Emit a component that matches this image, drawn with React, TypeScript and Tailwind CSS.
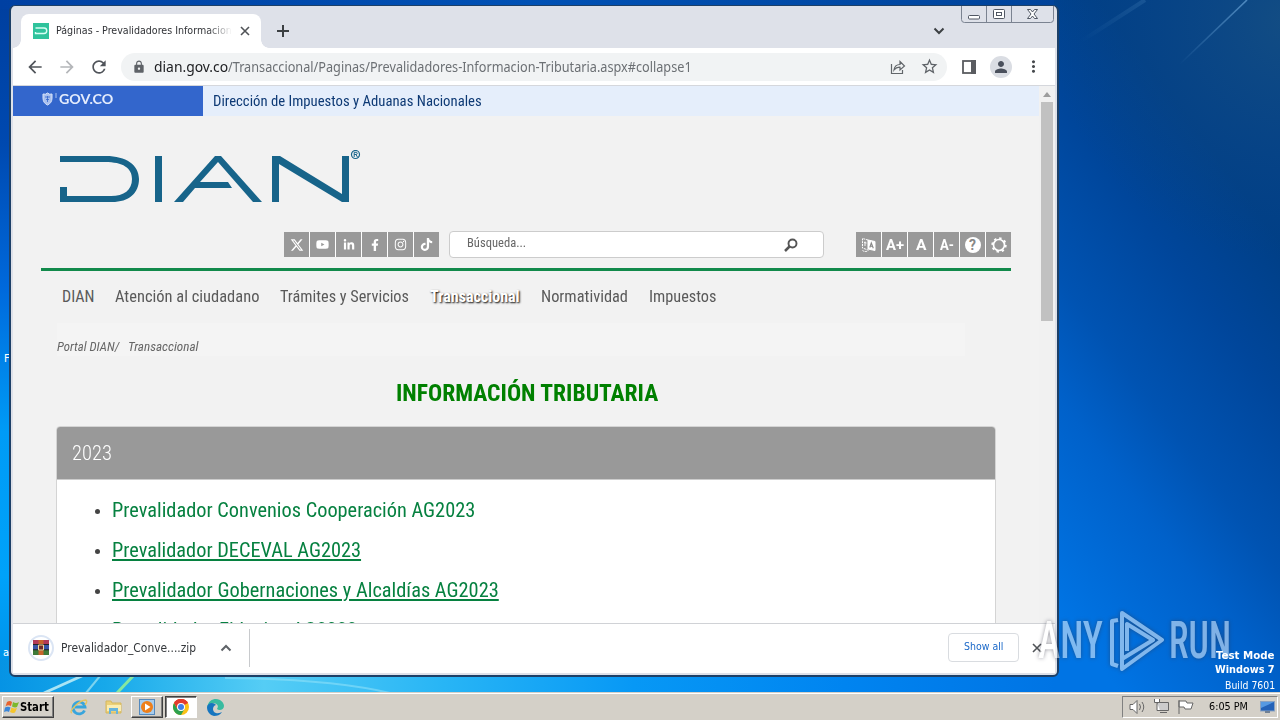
import React, { useLayoutEffect, useRef, useState } from 'react';
import { FaLinkedinIn, FaFacebookF, FaInstagram, FaTiktok, FaYoutube } from 'react-icons/fa';
import { FaXTwitter } from 'react-icons/fa6';
import { MdRefresh, MdLock, MdStarOutline, MdPerson, MdMoreVert, MdArrowBack, MdArrowForward } from 'react-icons/md';

interface FitProps {
  w: number;
  className?: string;
  inner?: string;
  children: React.ReactNode;
}

// Squeezes a line of text horizontally so that it takes exactly `w` pixels.
const Fit: React.FC<FitProps> = ({ w, className = '', inner = '', children }) => {
  const ref = useRef<HTMLSpanElement>(null);
  const [scale, setScale] = useState(1);

  useLayoutEffect(() => {
    if (ref.current) setScale(w / ref.current.offsetWidth);
  }, [w]);

  return (
    <span className={`block shrink-0 whitespace-nowrap ${className}`} style={{ width: w }}>
      <span ref={ref} className={`inline-block origin-left ${inner}`} style={{ transform: `scaleX(${scale})` }}>
        {children}
      </span>
    </span>
  );
};

const nav = [
  { label: 'DIAN', w: 32 },
  { label: 'Atención al ciudadano', w: 144 },
  { label: 'Trámites y Servicios', w: 129 },
  { label: 'Transaccional', w: 90, active: true },
  { label: 'Normatividad', w: 87 },
  { label: 'Impuestos', w: 67 },
];

const links = [
  { label: 'Prevalidador Convenios Cooperación AG2023', w: 363, underline: false },
  { label: 'Prevalidador DECEVAL AG2023', w: 249, underline: true },
  { label: 'Prevalidador Gobernaciones y Alcaldías AG2023', w: 387, underline: true },
  { label: 'Prevalidador Fiducias AG2023', w: 245, underline: true },
];

const Tile: React.FC<{ children: React.ReactNode }> = ({ children }) => (
  <span className="flex h-[25px] w-[25px] items-center justify-center bg-[#999] text-[14px] font-bold text-white">{children}</span>
);

const CloseIcon: React.FC<{ className: string }> = ({ className }) => (
  <svg className={className} width="10" height="10" viewBox="0 0 10 10">
    <path d="M1 1l8 8M9 1L1 9" stroke="#505357" strokeWidth="1.600" />
  </svg>
);

const Wallpaper = () => (
  <svg className="absolute inset-0" width="1280" height="720" viewBox="0 0 1280 720">
    <defs>
      <linearGradient id="left" x1="0" y1="0" x2="0" y2="1">
        <stop offset="0" stopColor="#003f9f" />
        <stop offset=".2" stopColor="#0049b0" />
        <stop offset=".4" stopColor="#0069dc" />
        <stop offset=".6" stopColor="#009bf6" />
        <stop offset=".8" stopColor="#00a2fa" />
        <stop offset="1" stopColor="#0089e0" />
      </linearGradient>
      <linearGradient id="bottom">
        <stop offset="0" stopColor="#0693e4" />
        <stop offset=".1" stopColor="#17a9ea" />
        <stop offset=".25" stopColor="#55cdf5" />
        <stop offset=".42" stopColor="#28b5f5" />
        <stop offset=".6" stopColor="#0798f5" />
        <stop offset=".8" stopColor="#0084f0" />
        <stop offset="1" stopColor="#0074e4" />
      </linearGradient>
      <linearGradient id="right" gradientUnits="userSpaceOnUse" x1="1050" y1="600" x2="1370" y2="360">
        <stop offset="0" stopColor="#0074e4" />
        <stop offset=".32" stopColor="#0061ca" />
        <stop offset=".5" stopColor="#0053b2" />
        <stop offset=".76" stopColor="#00469b" />
        <stop offset="1" stopColor="#003f86" />
      </linearGradient>
      <radialGradient id="corner" gradientUnits="userSpaceOnUse" cx="1290" cy="20" r="240">
        <stop offset="0" stopColor="#134d83" />
        <stop offset="1" stopColor="#0a4489" stopOpacity="0" />
      </radialGradient>
      <linearGradient id="ray" x1="1" y1="0" x2="0" y2="1">
        <stop offset="0" stopColor="#4f8ac0" />
        <stop offset="1" stopColor="#4f8ac0" stopOpacity="0" />
      </linearGradient>
      <linearGradient id="top">
        <stop offset="0" stopColor="#0040a2" />
        <stop offset=".5" stopColor="#0051b5" />
        <stop offset="1" stopColor="#00439a" />
      </linearGradient>
    </defs>
    <rect width="700" height="720" fill="url(#left)" />
    <rect y="660" width="1056" height="40" fill="url(#bottom)" />
    <rect width="1058" height="9" fill="url(#top)" />
    <rect x="1054" width="226" height="720" fill="url(#right)" />
    <rect x="1054" width="226" height="260" fill="url(#corner)" />
    <path d="M1180 64L1247 0" stroke="url(#ray)" strokeWidth="1.600" />
    <path d="M1080 42L1145 0" stroke="url(#ray)" strokeWidth="4" opacity=".25" />
    <path d="M44 693L84 675" stroke="#a9e4f5" strokeWidth="3" />
    <path d="M86 693L100 676" stroke="#7bd3ef" strokeWidth="2" />
    <path d="M117 693L134 675" stroke="#86e8a0" strokeWidth="3" />
    <path d="M225 678Q330 679 390 693" stroke="#9be6fa" strokeWidth="2" fill="none" opacity=".5" />
  </svg>
);

const DianLogo = () => (
  <svg width="302" height="56" viewBox="0 0 302 56" fill="none" className="block">
    <g fill="#17648a">
      <path d="M0 6h46c20 0 33 9 33 23s-10 23-27 23H0V37h7v9h44c13 0 21-6 21-17S63 12 45 12H0z" />
      <path d="M95 6h7v46h-7zM114 52l41-46h6l41 46h-9l-35-40-18 20h28l4 6h-37l-12 14zM212 52V6h8l62 38V6h7v46h-7l-63-38v38z" />
    </g>
    <circle cx="295.500" cy="4.500" r="4" stroke="#17648a" strokeWidth="1.200" />
    <path d="M294.200 7V2.300h2q1 0 1 1.100t-1 1.100h-2m1.800 0l1.400 2.500" stroke="#17648a" strokeWidth="1" />
  </svg>
);

const TabStrip = () => (
  <div className="flex h-[39px] items-end">
    <div className="relative ml-2 flex h-[34px] w-[240px] items-center rounded-t-lg bg-white pl-3 before:absolute before:bottom-0 before:-left-2 before:h-2 before:w-2 before:bg-[radial-gradient(circle_at_0_0,transparent_7.5px,white_8px)] after:absolute after:-right-2 after:bottom-0 after:h-2 after:w-2 after:bg-[radial-gradient(circle_at_100%_0,transparent_7.5px,white_8px)]">
      <svg width="16" height="16" viewBox="0 0 16 16">
        <rect width="16" height="16" fill="#2fc39c" />
        <path d="M2.500 5h8.500a2.600 2.600 0 0 1 0 5.500H2.500v-1.500" stroke="#d8fff4" strokeWidth="1.400" fill="none" />
      </svg>
      <Fit w={176} className="ml-[7px] [mask-image:linear-gradient(90deg,black_86%,transparent)] text-[11px] text-[#303236]">Páginas - Prevalidadores Informacion</Fit>
      <CloseIcon className="ml-[8px]" />
    </div>
    <svg className="mb-[11px] ml-[16px]" width="12" height="12" viewBox="0 0 12 12">
      <path d="M6 0v12M0 6h12" stroke="#3c4043" strokeWidth="2" />
    </svg>
    <svg className="mr-[110px] mb-[13px] ml-auto" width="12" height="8" viewBox="0 0 12 8">
      <path d="M1.500 1.500L6 6l4.500-4.500" stroke="#3c4043" strokeWidth="2" fill="none" />
    </svg>
  </div>
);

const Toolbar = () => (
  <div className="flex h-[38px] items-center border-b border-[#d5d7dc] bg-white pl-[12px] text-[#5f6368]">
    <MdArrowBack className="size-5 text-[#50545a]" />
    <MdArrowForward className="ml-3 size-5 text-[#b4b6b9]" />
    <MdRefresh className="ml-3 size-5 text-[#50545a]" />
    <div className="ml-[12px] flex h-[28px] w-[826px] items-center rounded-full bg-[#f1f3f4]">
      <MdLock className="ml-[11px] size-[14px]" />
      <Fit w={74} className="ml-[8px] pt-px font-['Noto_Sans',sans-serif] text-[13.5px] text-[#202124]">dian.gov.co</Fit>
      <Fit w={464} className="pt-px font-['Noto_Sans',sans-serif] text-[13.5px] text-[#6c7074]">/Transaccional/Paginas/Prevalidadores-Informacion-Tributaria.aspx#collapse1</Fit>
      <svg className="ml-auto" width="16" height="16" viewBox="0 0 16 16" fill="none" stroke="#62666a" strokeWidth="1.200">
        <path d="M1.500 5v9.500h11V11" />
        <path d="M4 11c.5-4 3-5.500 6-5.500V2.500l4.500 4.500-4.500 4V8.200C7 8 5.500 9 4 11z" />
      </svg>
      <MdStarOutline className="mr-[8px] ml-[14px] size-[19px]" />
    </div>
    <svg className="ml-[15px]" width="15" height="14" viewBox="0 0 15 14">
      <rect x="1" y="1" width="12" height="12" fill="none" stroke="#5a5c60" strokeWidth="1.800" />
      <rect x="9" y="0" width="5" height="14" fill="#5a5c60" />
    </svg>
    <span className="ml-[13px] flex size-[22px] items-center justify-center rounded-full bg-[#dadde3]">
      <MdPerson className="size-[18px] text-[#4a505c]" />
    </span>
    <MdMoreVert className="ml-[12px] size-[19px] text-[#46494d]" />
  </div>
);

const Page = () => (
  <div className="flex h-[537px] overflow-hidden bg-[#f2f2f2] font-['Roboto_Condensed','Roboto',sans-serif]">
    <div className="w-[1026px]">
      <div className="flex h-[30px] items-center bg-[#e5eefb]">
        <div className="flex h-full w-[190px] items-center bg-[#3366cc] pb-1 pl-[29px]">
          <svg width="16" height="14" viewBox="0 0 16 14">
            <path d="M1 2q2.500 1 4.500-1 2 2 4.500 1v4q0 5-4.500 7Q1 11 1 6z" fill="#a9c0ee" stroke="#d9e4fa" />
            <path d="M3 5h5M4 7.500h3M5.500 4v6" stroke="#3366cc" strokeWidth=".8" />
            <path d="M14 1v5" stroke="#a9c0ee" />
          </svg>
          <Fit w={54} className="ml-[1px] font-['Lato',sans-serif] text-[14px] leading-5 font-bold text-[#e4ecfc]">GOV.CO</Fit>
        </div>
        <Fit w={269} className="ml-[10px] text-[15px] text-[#0e3a75]">Dirección de Impuestos y Aduanas Nacionales</Fit>
      </div>

      <div className="pt-[34px] pl-[47px]">
        <DianLogo />
      </div>

      <div className="mt-[25px] ml-[28px] flex h-[40px] w-[970px] items-start border-b-3 border-[#128a4b] pl-[243px]">
        <div className="mt-[1px] flex gap-px bg-white">
          <Tile><FaXTwitter className="size-[14px]" /></Tile>
          <Tile><FaYoutube className="size-[13px]" /></Tile>
          <Tile><FaLinkedinIn className="size-[12px]" /></Tile>
          <Tile><FaFacebookF className="size-[12px]" /></Tile>
          <Tile><FaInstagram className="size-[13px]" /></Tile>
          <Tile><FaTiktok className="size-[13px]" /></Tile>
        </div>
        <div className="ml-[10px] flex h-[27px] w-[375px] items-center rounded-[4px] border border-[#ccc] bg-white pr-[25px] pl-[17px]">
          <Fit w={59} className="pb-[4px] text-[13px] text-[#666]">Búsqueda...</Fit>
          <svg className="ml-auto" width="14" height="14" viewBox="0 0 14 14" fill="none" stroke="#555">
            <circle cx="8.500" cy="5.500" r="4" strokeWidth="1.900" />
            <path d="M5.500 8.500l-4.500 4.500" strokeWidth="2.500" />
          </svg>
        </div>
        <div className="mt-[1px] ml-[32px] flex gap-px bg-white">
          <Tile>
            <svg width="15" height="16" viewBox="0 0 15 16" fill="none" stroke="white">
              <path d="M7 3l7 1.500v9L7 12z" fill="white" />
              <path d="M7 3L1.500 1.500V11L7 13M1.500 13.500q3 2 6 0" strokeDasharray="2 .8" />
              <path d="M3 5.500l2.500.5M4 4.500V9" strokeWidth=".9" />
              <path d="M8.800 10.500L10.300 6l2 5.200M9.300 9l2.200.4" stroke="#888" strokeWidth="1.100" />
            </svg>
          </Tile>
          <Tile><Fit w={18} className="pt-px font-['Roboto']">A+</Fit></Tile>
          <Tile><Fit w={10} className="pt-px font-['Roboto']">A</Fit></Tile>
          <Tile><Fit w={14} className="pt-px font-['Roboto']">A-</Fit></Tile>
          <Tile><span className="flex size-[16px] items-center justify-center rounded-full bg-white pt-px font-['Roboto'] text-[14px] leading-none text-[#888]">?</span></Tile>
          <Tile>
            <svg width="18" height="18" viewBox="0 0 18 18" fill="none" stroke="white">
              <circle cx="9" cy="9" r="5.500" strokeWidth="1.700" />
              <circle cx="9" cy="9" r="6.800" strokeWidth="1.800" strokeDasharray="2.400 2.940" />
            </svg>
          </Tile>
        </div>
      </div>

      <nav className="ml-[49px] flex h-[52px] items-center gap-[21px] text-[16px] text-[#5a5a5a]">
        {nav.map((item) => (
          <Fit key={item.label} w={item.w} className={item.active ? 'font-bold text-white [text-shadow:1px_1px_2px_#000]' : ''}>
            {item.label}
          </Fit>
        ))}
      </nav>

      <div className="ml-[44px] flex h-[33px] w-[908px] items-center bg-[#f4f4f4] pt-[14px] text-[13px] text-[#666] italic">
        <Fit w={62}>Portal DIAN/</Fit>
        <Fit w={71} className="ml-[9px]">Transaccional</Fit>
      </div>

      <h1 className="mt-[19px] ml-[383px] text-[24px] leading-9 font-bold text-[#008000]">
        <Fit w={262}>INFORMACIÓN TRIBUTARIA</Fit>
      </h1>

      <div className="mt-[15px] ml-[43px] h-[400px] w-[940px] rounded-t border border-[#d4d4d4] bg-white">
        <div className="flex h-[53px] items-center rounded-t-[3px] border-b border-[#ccc] bg-[#999] pb-px pl-[15px] text-[20px] font-light text-white">
          <Fit w={40}>2023</Fit>
        </div>
        <ul className="pt-[10px] pl-[38px]">
          {links.map((link) => (
            <li key={link.label} className="flex h-10 items-center text-[20px] text-[#068140] last:pb-px">
              <span className="mt-[3px] mr-[12px] size-[5px] rounded-full bg-[#444]" />
              <Fit w={link.w} inner={link.underline ? 'underline decoration-2 underline-offset-[2px]' : ''}>
                {link.label}
              </Fit>
            </li>
          ))}
        </ul>
      </div>
    </div>

    <div className="flex w-[16px] flex-col items-center bg-[#f1f1f1]">
      <svg className="mt-[6px]" width="8" height="5" viewBox="0 0 8 5">
        <path d="M0 5l4-5 4 5z" fill="#9d9d9d" />
      </svg>
      <div className="mt-[5px] h-[219px] w-[12px] bg-[#c1c1c1]" />
    </div>
  </div>
);

const DownloadBar = () => (
  <div className="flex h-[50px] items-center border-t border-[#d0d2d6] bg-white pb-[2px]">
    <span className="ml-[15px] flex size-[26px] items-center justify-center rounded-full border-2 border-[#dbe5f4]">
      <svg width="16" height="15" viewBox="0 0 16 15">
        <path d="M0 0h16v5H0z" fill="#b23a58" />
        <path d="M0 5h16v5H0z" fill="#3856a8" />
        <path d="M0 10h16v5H0z" fill="#3d7a3a" />
        <path d="M5.500 0h5v5h-5zM5.500 10h5v5h-5z" fill="#c8642c" />
        <path d="M0 4.500h16M0 9.800h16" stroke="#222" />
        <path d="M5.500 5h5v5h-5z" fill="#702b28" stroke="#f0d9a0" />
      </svg>
    </span>
    <Fit w={135} className="ml-[7px] text-[12px] text-[#34373b]">Prevalidador_Conve....zip</Fit>
    <svg className="ml-[24px]" width="12" height="8" viewBox="0 0 12 8">
      <path d="M1.500 6.500L6 2l4.500 4.500" stroke="#5f6368" strokeWidth="2" fill="none" />
    </svg>
    <div className="ml-[17px] h-[38px] w-px bg-[#c8cacd]" />
    <div className="ml-auto flex h-[29px] w-[71px] items-center justify-center rounded border border-[#d9dce0]">
      <Fit w={39} className="text-[11px] text-[#1a68c8]">Show all</Fit>
    </div>
    <CloseIcon className="mr-[13px] ml-[13px]" />
  </div>
);

const BrowserWindow = () => (
  <div className="absolute top-[5px] left-[9px] h-[672px] w-[1050px] rounded-[6px] border-2 border-t border-[#1d4067] bg-[#dee1e9] px-[2px] pt-[3px]">
    <TabStrip />
    <Toolbar />
    <Page />
    <DownloadBar />
    <svg className="absolute top-0 right-[2px]" width="94" height="18" viewBox="0 0 94 18" fill="none" stroke="#7b8391">
      <path d="M.5 0v13.500q0 3 3 3h86q3 0 3-3V0M25.500 0v16M50.500 0v16" />
      <g stroke="#3e4654" strokeWidth=".9">
        <rect x="7.500" y="9.500" width="11" height="3.500" rx="1" fill="white" />
        <rect x="32.500" y="3.500" width="11" height="9" rx="1" fill="white" />
        <rect x="35.500" y="6.500" width="5" height="3" />
        <path d="M66.500 3.500h3l2 2.500 2-2.500h3L73 8l3.500 4.500h-3l-2-2.500-2 2.500h-3L70 8z" fill="white" />
      </g>
    </svg>
  </div>
);

const Watermark = () => (
  <div className="absolute top-[608px] left-[1038px] flex h-[66px] items-center font-['Roboto_Condensed','Roboto',sans-serif] text-[51px] leading-[60px] font-medium text-white opacity-50 drop-shadow-[0_0_2px_#334]">
    <Fit w={65}>ANY</Fit>
    <svg className="ml-[6px]" width="56" height="64" viewBox="0 0 56 64" fill="none" stroke="white" strokeWidth="4" strokeLinejoin="round">
      <path d="M9 11L3 12V55L9 57M13 53V4L53 31 13 60V50L44 31 18 15V42" />
    </svg>
    <Fit w={62} className="ml-[4px]">RUN</Fit>
  </div>
);

const Taskbar = () => (
  <div className="absolute bottom-0 left-0 flex h-[28px] w-full items-center border-t border-[#d4d0c8] bg-[#d4d0c8] pt-[1px] pl-[2px] shadow-[inset_0_1px_0_white]">
    <div className="flex h-[22px] w-[52px] items-center border border-t-white border-r-[#404040] border-b-[#404040] border-l-white pl-[1px] shadow-[inset_-1px_-1px_0_#808080]">
      <svg width="16" height="16" viewBox="0 0 16 16">
        <path d="M3 3q3-2 5 0L7 7Q4 5.500 1.500 7.500z" fill="#e8622c" />
        <path d="M9 3q3 2 6 0l-2 5q-2 1-5-.5z" fill="#7cb82c" />
        <path d="M1 8.500q3-1.500 5.500 0L5 13q-2-1.500-5 0z" fill="#3a86d8" />
        <path d="M7.500 8.500q3 1.500 5.500.5l-2 4.500q-2 1-5-.5z" fill="#f5c52c" />
      </svg>
      <Fit w={29} className="text-[12px] font-bold text-black">Start</Fit>
    </div>
    <svg className="ml-[16px]" width="18" height="18" viewBox="0 0 18 18" fill="none">
      <path d="M14.500 12.500A6 6 0 1 1 15 9H5" stroke="#38a5dc" strokeWidth="2.800" />
      <path d="M2 15Q-1 14 5 8T16 2q2 1-1 5" stroke="#e5c45e" strokeWidth="1.300" />
    </svg>
    <svg className="ml-[17px]" width="17" height="16" viewBox="0 0 17 16">
      <path d="M1 2h5l1 2h9v10H1z" fill="#ecd078" stroke="#d5b75c" />
      <path d="M2 6h14v6H2z" fill="#fbedb2" />
      <path d="M4 15V9h9v6h-2v-3H6v3z" fill="#67b4dc" />
    </svg>
    <span className="ml-[9px] flex h-[22px] w-[32px] items-center justify-center border border-t-white border-r-[#404040] border-b-[#404040] border-l-white shadow-[inset_-1px_-1px_0_#808080]">
      <svg width="16" height="16" viewBox="0 0 16 16">
        <rect x=".5" y=".5" width="15" height="15" fill="#a9cdec" stroke="#5489bd" />
        <circle cx="8" cy="8" r="6" fill="#ee7f1a" />
        <path d="M6 4.500v7l5.500-3.500z" fill="white" />
      </svg>
    </span>
    <span className="ml-[2px] flex h-[22px] w-[32px] items-center justify-center border border-t-[#404040] border-r-white border-b-white border-l-[#404040] bg-white shadow-[inset_1px_1px_0_#808080]">
      <svg width="16" height="16" viewBox="0 0 16 16">
        <circle cx="8" cy="8" r="8" fill="#fbc116" />
        <path d="M8 8L1.070 4A8 8 0 0 1 14.930 4z" fill="#e33b2e" />
        <path d="M1.070 4A8 8 0 0 0 8 16L11.500 10 8 8 4.500 10z" fill="#2da14e" />
        <path d="M8 4h6.930A8 8 0 0 0 1.070 4L4.500 10z" fill="#e33b2e" />
        <circle cx="8" cy="8" r="4" fill="white" />
        <circle cx="8" cy="8" r="3" fill="#3f7fe8" />
      </svg>
    </span>
    <svg className="ml-[10px]" width="17" height="17" viewBox="0 0 17 17">
      <path d="M0 9C1 2 5 0 9 0c5 0 8 4 8 7 0 4-5 5-7 3 3-4-2-7-6-5-2 1-4 3-4 4z" fill="#38bba0" />
      <path d="M0 8C1 3 7 3 9 6c-4 1-4 7 0 8 3 1 5-1 6-1-2 3-5 4-8 4-4-1-7-4-7-9z" fill="#1675bf" />
    </svg>
    <div className="mr-[2px] ml-auto flex h-[22px] w-[156px] items-center border border-t-[#808080] border-r-white border-b-white border-l-[#808080] pl-[6px]">
      <svg width="68" height="18" viewBox="0 0 68 18" fill="white" stroke="#666">
        <path d="M1 6.500h3l4-4v13l-4-4H1z" />
        <path d="M10.500 6q2 3 0 6M13 4q3.500 5 0 10" fill="none" />
        <path d="M28.500 4.500h11v8h-11zM31 14.500h7" fill="#ccc" />
        <path d="M25.500 1v3.500h5V1M28 4.500v8h3" />
        <path d="M50 16V2M50 3h7l1 2h6l-2 6h-6l-1-2h-5z" />
      </svg>
      <Fit w={39} className="ml-[12px] text-[11px] text-black">6:05 PM</Fit>
      <svg className="ml-[12px]" width="15" height="15" viewBox="0 0 15 15">
        <rect x=".5" y="1.500" width="14" height="9.500" fill="#2462b8" stroke="#8ba2c0" />
        <path d="M1 2h13L1 8z" fill="#5699e2" />
        <path d="M5 11h5v2H5z" fill="#718195" />
      </svg>
    </div>
  </div>
);

export default function App() {
  return (
    <div className="relative h-[720px] w-[1280px] overflow-hidden font-['DejaVu_Sans_Condensed','DejaVu_Sans',sans-serif]">
      <Wallpaper />
      <span className="absolute top-[351px] left-[4px] text-[11px] text-white">F</span>
      <span className="absolute top-[645px] left-[3px] text-[11px] text-white">a</span>
      <BrowserWindow />
      <Watermark />
      <div className="absolute top-[649px] right-[5px] flex flex-col items-end text-[11px] leading-[14px] text-white">
        <Fit w={59} className="font-bold">Test Mode</Fit>
        <Fit w={60} className="font-bold">Windows 7</Fit>
        <Fit w={50} className="mt-[2px]">Build 7601</Fit>
      </div>
      <Taskbar />
    </div>
  );
}
